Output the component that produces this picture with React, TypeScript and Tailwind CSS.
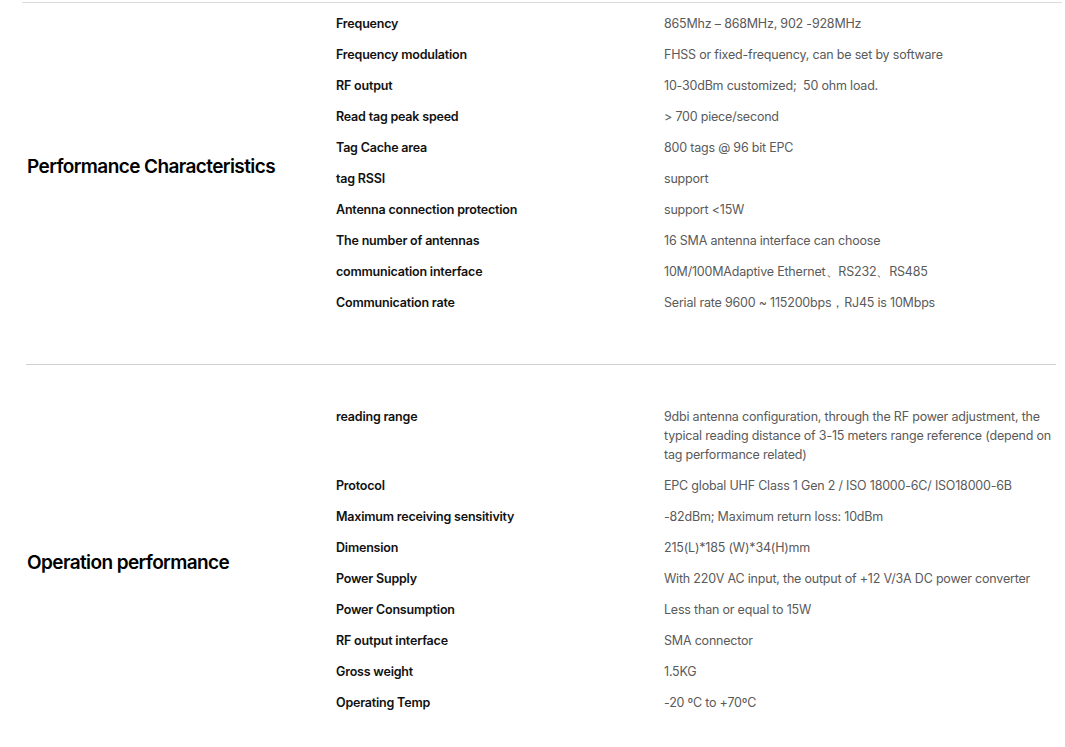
import React from 'react';

type Spec = { label: string; value: string };

const performance: Spec[] = [
  { label: 'Frequency', value: '865Mhz – 868MHz, 902 -928MHz' },
  { label: 'Frequency modulation', value: 'FHSS or fixed-frequency, can be set by software' },
  { label: 'RF output', value: '10-30dBm customized;  50 ohm load.' },
  { label: 'Read tag peak speed', value: '> 700 piece/second' },
  { label: 'Tag Cache area', value: '800 tags @ 96 bit EPC' },
  { label: 'tag RSSI', value: 'support' },
  { label: 'Antenna connection protection', value: 'support <15W' },
  { label: 'The number of antennas', value: '16 SMA antenna interface can choose' },
  { label: 'communication interface', value: '10M/100MAdaptive Ethernet、RS232、RS485' },
  { label: 'Communication rate', value: 'Serial rate 9600 ~ 115200bps，RJ45 is 10Mbps' },
];

const operation: Spec[] = [
  {
    label: 'reading range',
    value:
      '9dbi antenna configuration, through the RF power adjustment, the typical reading distance of 3-15 meters range reference (depend on tag performance related)',
  },
  { label: 'Protocol', value: 'EPC global UHF Class 1 Gen 2 / ISO 18000-6C/ ISO18000-6B' },
  { label: 'Maximum receiving sensitivity', value: '-82dBm; Maximum return loss: 10dBm' },
  { label: 'Dimension', value: '215(L)*185 (W)*34(H)mm' },
  { label: 'Power Supply', value: 'With 220V AC input, the output of +12 V/3A DC power converter' },
  { label: 'Power Consumption', value: 'Less than or equal to 15W' },
  { label: 'RF output interface', value: 'SMA connector' },
  { label: 'Gross weight', value: '1.5KG' },
  { label: 'Operating Temp', value: '-20 ºC to +70ºC' },
];

const SpecRow = ({ label, value }: Spec) => (
  <div className="flex py-[6px] leading-[19px] text-[12.5px] tracking-[-0.2px]">
    <div className="w-[328px] shrink-0 font-semibold text-[#111]">{label}</div>
    <div className="w-[392px] text-[#5a5a5a] whitespace-pre-wrap">{value}</div>
  </div>
);

const Section = ({ title, rows, className }: { title: string; rows: Spec[]; className: string }) => (
  <div className={`flex items-center ${className}`}>
    <div className="w-[314px] shrink-0 pl-[5px] pt-[8px] text-[19px] font-semibold text-black tracking-[-0.6px]">
      {title}
    </div>
    <div className="flex flex-col">
      {rows.map((r) => (
        <SpecRow key={r.label} {...r} />
      ))}
    </div>
  </div>
);

export default function App() {
  return (
    <div
      className="w-[1065px] h-[747px] overflow-hidden bg-white pl-[22px] pr-[3px] pt-[2px]"
      style={{ fontFamily: 'Inter, "Noto Sans", sans-serif' }}
    >
      <div className="h-px bg-[#dcdcdc]" />
      <Section title="Performance Characteristics" rows={performance} className="pt-[5px] pb-[46px]" />
      <div className="h-px bg-[#d0d0d0] ml-[4px] mr-[6px]" />
      <Section title="Operation performance" rows={operation} className="pt-[36px]" />
    </div>
  );
}
